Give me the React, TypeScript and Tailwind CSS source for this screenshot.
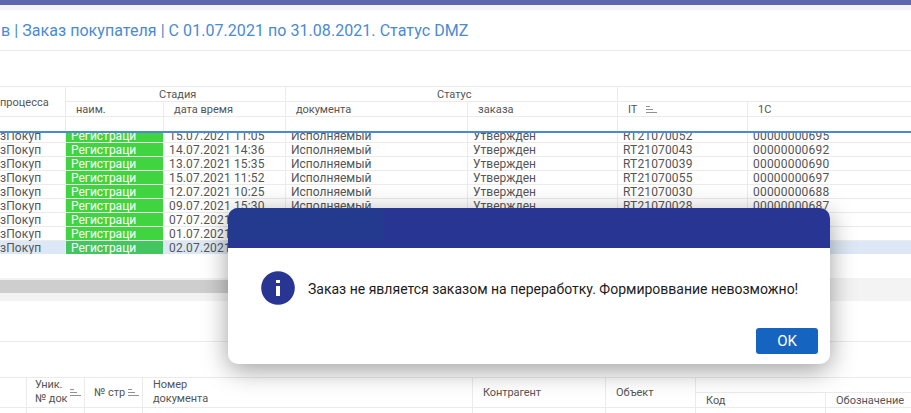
import React from 'react';

const rows = [
  ['15.07.2021 11:05', 'RT21070052', '00000000695'],
  ['14.07.2021 14:36', 'RT21070043', '00000000692'],
  ['13.07.2021 15:35', 'RT21070039', '00000000690'],
  ['15.07.2021 11:52', 'RT21070055', '00000000697'],
  ['12.07.2021 10:25', 'RT21070030', '00000000688'],
  ['09.07.2021 15:30', 'RT21070028', '00000000687'],
  ['07.07.2021', '', ''],
  ['01.07.2021', '', ''],
  ['02.07.2021', '', ''],
];

const COLS = 'grid grid-cols-[66px_98px_122px_182px_150px_130px_1fr] grid-rows-[13px]';
const CELL = 'border-r border-[#ebebeb] whitespace-nowrap';

function SortIcon({ className = '' }: { className?: string }) {
  return (
    <svg width="11" height="7" viewBox="0 0 11 7" className={`shrink-0 ${className}`} shapeRendering="crispEdges">
      <path d="M0 0h4v1H0zM0 3h7v1H0zM0 6h11v1H0z" fill="#929292" />
    </svg>
  );
}

function OrdersHeader() {
  return (
    <div className="flex h-[45px] border-t border-[#ebebeb] text-[11px] leading-[16px] text-[#555]">
      <div className="flex w-[66px] shrink-0 flex-col border-r border-[#ebebeb]">
        <div className="h-[30px] border-b border-[#ebebeb] pt-[8px]">процесса</div>
      </div>
      <div className="flex w-[220px] shrink-0 flex-col border-r border-[#ebebeb]">
        <div className="h-[15px] border-b border-[#ebebeb] pl-[93px]">Стадия</div>
        <div className="flex h-[29px]">
          <div className="w-[98px] border-r border-[#ebebeb]">
            <div className="h-[15px] border-b border-[#ebebeb] pl-[10px]">наим.</div>
          </div>
          <div className="h-[15px] grow border-b border-[#ebebeb] pl-[10px]">дата время</div>
        </div>
      </div>
      <div className="flex w-[332px] shrink-0 flex-col border-r border-[#ebebeb]">
        <div className="h-[15px] border-b border-[#ebebeb] pl-[151px]">Статус</div>
        <div className="flex h-[29px]">
          <div className="w-[182px] border-r border-[#ebebeb]">
            <div className="h-[15px] border-b border-[#ebebeb] pl-[10px] tracking-[-0.05px]">документа</div>
          </div>
          <div className="h-[15px] grow border-b border-[#ebebeb] pl-[10px] tracking-[0.1px]">заказа</div>
        </div>
      </div>
      <div className="flex grow flex-col">
        <div className="h-[15px] border-b border-[#ebebeb]" />
        <div className="flex h-[29px]">
          <div className="w-[130px] border-r border-[#ebebeb]">
            <div className="flex h-[15px] gap-[9px] border-b border-[#ebebeb] pl-[10px]">
              IT
              <SortIcon className="mt-[4px]" />
            </div>
          </div>
          <div className="h-[15px] grow border-b border-[#ebebeb] pl-[10px]">1C</div>
        </div>
      </div>
    </div>
  );
}

function OrdersBody() {
  return (
    <div className="flex h-[121px] flex-col justify-end overflow-hidden text-[12px] leading-[14px] text-[#555]">
      {rows.map(([date, it, code], i) => {
        const last = i === rows.length - 1;
        return (
          <div
            key={date + i}
            className={`${COLS} shrink-0 ${last ? 'h-[13px] bg-[#dce8f5]' : 'h-[14px] border-b border-[#ebebeb]'}`}
          >
            <div className={`${CELL} tracking-[0.1px]`}>зПокуп</div>
            <div className={`${CELL} pl-[5px] text-white ${last ? 'bg-[#43c55f]' : 'bg-[#40d440]'}`}>Регистраци</div>
            <div className={`${CELL} pl-[5px] tracking-[0.15px]`}>{date}</div>
            <div className={`${CELL} pl-[5px]`}>{it && 'Исполняемый'}</div>
            <div className={`${CELL} pl-[5px]`}>{it && 'Утвержден'}</div>
            <div className={`${CELL} pl-[5px] tracking-[0.15px]`}>{it}</div>
            <div className="pl-[5px] tracking-[0.2px]">{code}</div>
          </div>
        );
      })}
    </div>
  );
}

function DetailsHeader() {
  return (
    <div className="flex h-[36px] border-t border-[#ebebeb] text-[11px] leading-[14px] text-[#555]">
      <div className="flex w-[27px] shrink-0 border-r border-[#ebebeb]">
        <div className="h-[30px] grow border-b border-[#ebebeb]" />
      </div>
      <div className="flex w-[58px] shrink-0 border-r border-[#ebebeb]">
        <div className="flex h-[30px] grow justify-between whitespace-nowrap border-b border-[#ebebeb] pr-[3px] pl-[8px] tracking-[-0.1px]">
          <div>
            Уник.
            <br />№ док
          </div>
          <SortIcon className="mt-[11px]" />
        </div>
      </div>
      <div className="flex w-[58px] shrink-0 border-r border-[#ebebeb]">
        <div className="flex h-[30px] grow justify-between whitespace-nowrap border-b border-[#ebebeb] pr-[3px] pl-[9px]">
          <div className="pt-[8px]">№ стр</div>
          <SortIcon className="mt-[11px]" />
        </div>
      </div>
      <div className="flex w-[330px] shrink-0 border-r border-[#ebebeb]">
        <div className="h-[30px] grow border-b border-[#ebebeb] pl-[10px] tracking-[-0.05px]">
          Номер
          <br />
          документа
        </div>
      </div>
      <div className="flex w-[133px] shrink-0 border-r border-[#ebebeb]">
        <div className="h-[30px] grow border-b border-[#ebebeb] pt-[8px] pl-[10px] tracking-[-0.1px]">Контрагент</div>
      </div>
      <div className="flex w-[90px] shrink-0 border-r border-[#ebebeb]">
        <div className="h-[30px] grow border-b border-[#ebebeb] pt-[8px] pl-[10px]">Объект</div>
      </div>
      <div className="flex grow flex-col">
        <div className="h-[15px] border-b border-[#ebebeb]" />
        <div className="flex h-[20px] leading-[16px]">
          <div className="w-[130px] border-r border-[#ebebeb]">
            <div className="h-[15px] border-b border-[#ebebeb] pl-[10px]">Код</div>
          </div>
          <div className="h-[15px] grow border-b border-[#ebebeb] pl-[10px]">Обозначение</div>
        </div>
      </div>
    </div>
  );
}

function MessageDialog() {
  return (
    <div className="absolute top-[208px] left-[228px] flex h-[156px] w-[602px] flex-col overflow-hidden rounded-[10px] bg-white shadow-[0_6px_26px_rgba(0,0,0,0.38)]">
      <div className="h-[40px] shrink-0 bg-[#283593]">
        <div className="h-[33px] w-[156px] bg-[#243a8e]" />
      </div>
      <div className="flex h-[80px] items-center pl-[33px]">
        <svg width="34" height="34" viewBox="0 0 34 34" className="shrink-0">
          <circle cx="17" cy="17" r="16.8" fill="#283593" />
          <path d="M15 9h4v3h-4zM15 15h4v10h-4z" fill="#fff" />
        </svg>
        <p className="pt-[2px] pl-[13px] text-[14px] leading-[20px] whitespace-nowrap text-[#1c1c1c]">
          Заказ не является заказом на переработку. Формироввание невозможно!
        </p>
      </div>
      <div className="flex justify-end pr-[12px]">
        <button className="h-[26px] w-[62px] rounded-[3px] bg-[#1565c0] text-[15px] leading-[26px] text-white">OK</button>
      </div>
    </div>
  );
}

export default function App() {
  return (
    <div className="relative flex h-[413px] w-[911px] flex-col overflow-hidden bg-white font-[Roboto,sans-serif]">
      <div className="h-[5px] shrink-0 bg-[#5f67ae]" />
      <div className="h-[5px] shrink-0 bg-[#f6f6fa]" />
      <div className="h-[41px] shrink-0 border-b border-[#ebebeb] pl-px text-[16px] leading-[42px] tracking-[0.05px] whitespace-nowrap text-[#4a8ad4]">
        в | Заказ покупателя | С 01.07.2021 по 31.08.2021. Статус DMZ
      </div>
      <div className="h-[35px] shrink-0" />
      <OrdersHeader />
      <div className="h-[2px] shrink-0 bg-[#4a8ad4]" />
      <OrdersBody />
      <div className="h-[24px] shrink-0" />
      <div className="flex h-[23px] shrink-0 items-start bg-[#f3f3f3] pt-[2px]">
        <div className="h-[13px] w-[600px] bg-[#cecece]" />
      </div>
      <div className="h-[41px] shrink-0 border-b border-[#ebebeb]" />
      <div className="h-[35px] shrink-0" />
      <DetailsHeader />
      <MessageDialog />
    </div>
  );
}
